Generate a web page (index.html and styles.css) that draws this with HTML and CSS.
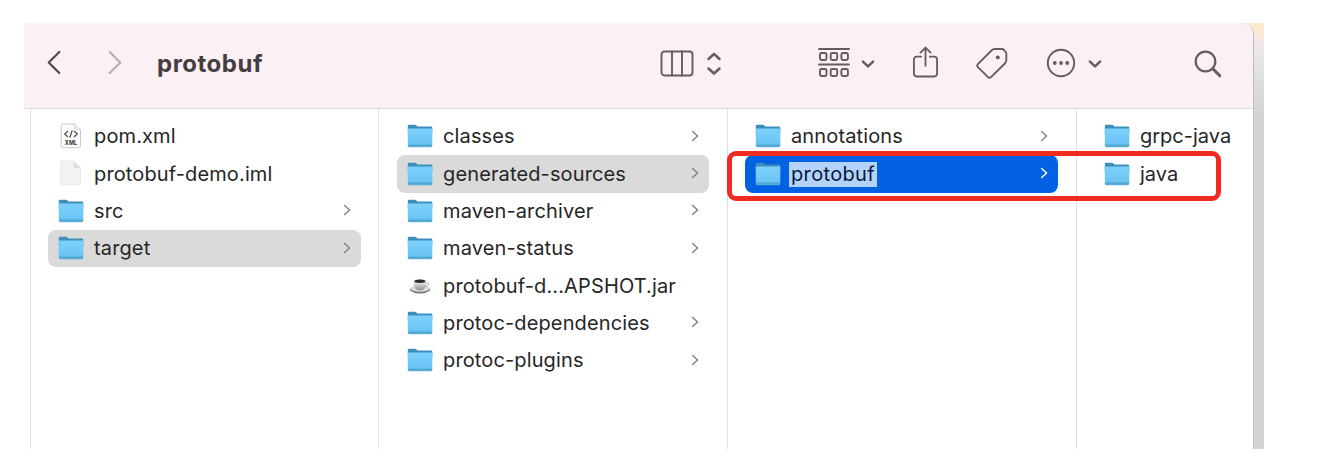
FILE: index.html
```html
<!DOCTYPE html>
<html lang="en">
<head>
<meta charset="utf-8">
<title>protobuf</title>
<link rel="stylesheet" href="styles.css">
</head>
<body>
<svg class="defs" aria-hidden="true">
  <defs>
    <linearGradient id="front" x1="0" y1="0" x2="0" y2="1">
      <stop offset="0" stop-color="#7dd0fb"/><stop offset="0.75" stop-color="#6cc6f6"/><stop offset="1" stop-color="#55a9d4"/>
    </linearGradient>
    <linearGradient id="cup" x1="0" y1="0" x2="0" y2="1">
      <stop offset="0" stop-color="#eee"/><stop offset="1" stop-color="#8e8e8e"/>
    </linearGradient>
    <symbol id="folder" viewBox="0 0 26 24">
      <path d="M.8 2.200Q.8.8 2.200.8H8q.8 0 1.500.7l.9.9H24q1.300 0 1.300 1.400V10H.8z" fill="#3c8fb9"/>
      <path d="M.8 4.600h24.500v17q0 1.600-1.600 1.600H2.400Q.8 23.200.8 21.600z" fill="url(#front)"/>
      <path d="M1 21.400h24.100" stroke="#4f9fc9" stroke-width=".8"/>
    </symbol>
    <symbol id="xml" viewBox="0 0 26 26">
      <path d="M5 1h11.500l6 5.500V23q0 1.800-1.800 1.800H5q-1.800 0-1.800-1.800V2.800Q3.200 1 5 1z" fill="#fcfcfc" stroke="#c9c9c9"/>
      <path d="M16.500 1v4q0 1.500 1.500 1.500h4.500" fill="#eee" stroke="#d2d2d2" stroke-width=".8"/>
      <path d="M10 8l-3.300 3L10 14M16 8l3.300 3L16 14M14.300 7.300l-2.600 7.400" fill="none" stroke="#555" stroke-width="1.300"/>
      <text x="13" y="21.600" class="badge">XML</text>
    </symbol>
    <symbol id="page" viewBox="0 0 26 26">
      <path d="M4 1h11.500l7 7v15.500q0 1.300-1.300 1.300H4q-1.300 0-1.300-1.300V2.300Q2.700 1 4 1z" fill="#f3f3f3" stroke="#e5e5e5" stroke-width=".8"/>
      <path d="M15.500 1v5.700q0 1.300 1.300 1.300h5.700z" fill="#ddd"/>
    </symbol>
    <symbol id="jar" viewBox="0 0 26 24">
      <ellipse cx="13" cy="15.500" rx="10" ry="4" fill="#777"/>
      <ellipse cx="13" cy="14.500" rx="9.500" ry="3.200" fill="#ddd"/>
      <path d="M6.500 7.500h12.800q0 9-6.400 9t-6.400-9z" fill="url(#cup)"/>
      <path d="M19 8.700q3.500 0 2.300 2.200-1 1.600-3.400 1.600" fill="none" stroke="#aaa"/>
      <ellipse cx="12.900" cy="7.400" rx="6.700" ry="2.500" fill="#ddd"/>
      <ellipse cx="12.900" cy="7.300" rx="5.400" ry="1.700" fill="#2c2826"/>
    </symbol>
    <symbol id="chev" viewBox="0 0 8 12">
      <path d="M1.600 1.500L6.600 6l-5 4.500" fill="none" stroke="currentColor" stroke-width="1.500" stroke-linecap="round" stroke-linejoin="round"/>
    </symbol>
    <symbol id="down" viewBox="0 0 14 10">
      <path d="M1.900 2.600L7 7.400l5.100-4.800" fill="none" stroke="currentColor" stroke-width="2.500" stroke-linecap="round" stroke-linejoin="round"/>
    </symbol>
  </defs>
</svg>

<div class="backdrop">
  <main class="window">
    <header class="toolbar">
      <svg class="back" viewBox="0 0 16 26"><path d="M13.500 2L2.500 13l11 11"/></svg>
      <svg class="forward" viewBox="0 0 16 26"><path d="M2.500 2l11 11-11 11"/></svg>
      <h1 class="title">protobuf</h1>
      <svg class="columns-icon" viewBox="0 0 34 28"><rect x="1.500" y="1.500" width="31" height="24" rx="3"/><path d="M12 1.500v24M22 1.500v24"/></svg>
      <svg class="updown" viewBox="0 0 16 26"><path d="M2.500 8L8 3l5.500 5M2.500 17.500L8 22.500l5.500-5"/></svg>
      <svg class="group-icon" viewBox="0 0 32 32">
        <path d="M1 2h30M1 17.500h30"/>
        <rect x="2" y="6" width="6.500" height="7" rx="1.500"/><rect x="12.700" y="6" width="6.500" height="7" rx="1.500"/><rect x="23.400" y="6" width="6.500" height="7" rx="1.500"/>
        <rect x="2" y="22" width="6.500" height="7" rx="1.500"/><rect x="12.700" y="22" width="6.500" height="7" rx="1.500"/><rect x="23.400" y="22" width="6.500" height="7" rx="1.500"/>
      </svg>
      <svg class="drop drop-group"><use href="#down"/></svg>
      <svg class="share" viewBox="0 0 28 34"><path d="M9.500 11.500H5q-3 0-3 3V29q0 3 3 3h18q3 0 3-3V14.500q0-3-3-3h-4.500M14 21V2.500M8.800 7.300L14 2l5.200 5.300"/></svg>
      <svg class="tag" viewBox="0 0 34 34"><path d="M2.700 18L17 3.600q1.500-1.500 3.500-1.500h7.200q1.300 0 2.200 1L31.300 4.700q1 1 1 2.300v6.500q0 2-1.500 3.500L16.500 31q-1.600 1.500-3.100 0L2.700 20.500q-1.200-1.200 0-2.500z"/><circle class="dot" cx="23.500" cy="10.700" r="2"/></svg>
      <svg class="more" viewBox="0 0 30 30"><circle cx="15" cy="15" r="13.200"/><circle class="dot" cx="8.800" cy="15" r="1.900"/><circle class="dot" cx="15" cy="15" r="1.900"/><circle class="dot" cx="21.200" cy="15" r="1.900"/></svg>
      <svg class="drop drop-more"><use href="#down"/></svg>
      <svg class="search" viewBox="0 0 28 28"><circle cx="11.500" cy="11.500" r="9.800"/><path class="handle" d="M18.800 18.800l7 7"/></svg>
    </header>

    <div class="browser">
      <ul class="column">
        <li class="row"><svg class="icon doc"><use href="#xml"/></svg><span class="name">pom.xml</span></li>
        <li class="row"><svg class="icon doc"><use href="#page"/></svg><span class="name">protobuf-demo.iml</span></li>
        <li class="row"><svg class="icon"><use href="#folder"/></svg><span class="name">src</span><svg class="chev"><use href="#chev"/></svg></li>
        <li class="row open"><svg class="icon"><use href="#folder"/></svg><span class="name">target</span><svg class="chev"><use href="#chev"/></svg></li>
      </ul>
      <ul class="column second">
        <li class="row"><svg class="icon"><use href="#folder"/></svg><span class="name">classes</span><svg class="chev"><use href="#chev"/></svg></li>
        <li class="row open"><svg class="icon"><use href="#folder"/></svg><span class="name">generated-sources</span><svg class="chev"><use href="#chev"/></svg></li>
        <li class="row"><svg class="icon"><use href="#folder"/></svg><span class="name">maven-archiver</span><svg class="chev"><use href="#chev"/></svg></li>
        <li class="row"><svg class="icon"><use href="#folder"/></svg><span class="name">maven-status</span><svg class="chev"><use href="#chev"/></svg></li>
        <li class="row"><svg class="icon"><use href="#jar"/></svg><span class="name">protobuf-d...APSHOT.jar</span></li>
        <li class="row"><svg class="icon"><use href="#folder"/></svg><span class="name">protoc-dependencies</span><svg class="chev"><use href="#chev"/></svg></li>
        <li class="row"><svg class="icon"><use href="#folder"/></svg><span class="name">protoc-plugins</span><svg class="chev"><use href="#chev"/></svg></li>
      </ul>
      <ul class="column">
        <li class="row"><svg class="icon"><use href="#folder"/></svg><span class="name">annotations</span><svg class="chev"><use href="#chev"/></svg></li>
        <li class="row selected"><svg class="icon"><use href="#folder"/></svg><span class="name editing">protobuf</span><svg class="chev"><use href="#chev"/></svg></li>
      </ul>
      <ul class="column">
        <li class="row"><svg class="icon"><use href="#folder"/></svg><span class="name tight">grpc-java</span></li>
        <li class="row"><svg class="icon"><use href="#folder"/></svg><span class="name tight">java</span></li>
      </ul>
      <div class="callout"></div>
    </div>
  </main>
</div>
</body>
</html>
```
FILE: styles.css
```css
* { box-sizing: border-box; }
body {
  margin: 0;
  padding: 23px 0 0 24px;
  height: 470px;
  overflow: hidden;
  background: #fff;
  font-family: Inter, "Liberation Sans", sans-serif;
  color: #262626;
}
svg { display: block; flex: none; }
.defs { position: absolute; width: 0; height: 0; }
.badge { font: 700 5.500px Inter, sans-serif; text-anchor: middle; fill: #333; }

.backdrop {
  width: 1240px;
  height: 426px;
  padding-right: 10px;
  background: linear-gradient(#fbe8cf 0, #fae9d8 12px, #eee6ee 22px, #dde2e1 50px, #d4d4d4 90px);
}
.window {
  width: 1230px;
  height: 426px;
  background: #fff;
  border-right: 1px solid #bdbbbc;
  border-top-right-radius: 12px;
  overflow: hidden;
}

.toolbar {
  display: flex;
  align-items: center;
  height: 86px;
  padding: 0 31px 6px 22px;
  background: #fbf1f4;
  border-bottom: 1px solid #e4dadd;
  color: #655c60;
}
.toolbar svg {
  fill: none;
  stroke: #655c60;
  stroke-width: 1.900px;
  stroke-linecap: round;
  stroke-linejoin: round;
}
.toolbar .dot { fill: #655c60; stroke: none; }
.toolbar .back { width: 16px; height: 25px; stroke-width: 2.300px; stroke: #514a4d; }
.toolbar .forward { width: 16px; height: 25px; margin-left: 45px; stroke-width: 2.300px; stroke: #b9afb3; }
.title {
  width: 504px;
  margin: 2px 0 0 34px;
  font-size: 24px;
  line-height: 30px;
  font-weight: 700;
  letter-spacing: .5px;
  color: #453d41;
}
.columns-icon { width: 34px; height: 28px; margin: 2px 0 0 2px; }
.toolbar .updown { width: 16px; height: 26px; margin: 3px 0 0 12px; stroke-width: 2.500px; }
.group-icon { width: 32px; height: 32px; margin-left: 96px; }
.toolbar .drop { width: 14px; height: 10px; }
.drop-group { margin: 2px 0 0 11px; }
.share { width: 27px; height: 34px; margin-left: 37px; margin-top: -2px; }
.tag { width: 33px; height: 33px; margin-left: 36px; margin-top: 2px; }
.more { width: 30px; height: 30px; margin-left: 38px; margin-top: 1px; }
.drop-more { margin: 2px 0 0 12px; }
.search { width: 28px; height: 28px; margin-left: 92px; margin-top: 2px; }
.toolbar .search { stroke-width: 2.200px; }
.toolbar .handle { stroke-width: 3px; }

.browser {
  position: relative;
  display: grid;
  grid-template-columns: 348px 349px 349px 177px;
  height: 340px;
  padding-left: 6px;
}
.column {
  margin: 0;
  padding: 9px 18px 0 17px;
  list-style: none;
  border-left: 1px solid #e0dfe0;
}
.column:first-child { padding-right: 17px; }
.second { padding-left: 18px; }
.row {
  display: flex;
  align-items: center;
  height: 37.350px;
  padding: 0 10px;
  border-radius: 8px;
}
.open { background: #dadada; }
.selected { background: #0262e3; }
.icon { width: 26px; height: 24px; margin-top: -1px; }
.doc { height: 26px; margin-top: -2px; }
.name {
  flex: 1;
  margin-left: 10px;
  font-size: 20px;
  line-height: 25px;
  letter-spacing: .13px;
  white-space: nowrap;
}
.tight { letter-spacing: 0; }
.chev { width: 8px; height: 12px; margin-top: -2px; color: #838383; }
.selected .chev { color: #fff; }
.editing {
  flex: none;
  margin: 0 auto 0 8px;
  padding: 0 2px;
  letter-spacing: .35px;
  background: #b3d3fa;
  color: #08183a;
}
.callout {
  position: absolute;
  left: 703px;
  top: 42px;
  width: 494px;
  height: 50px;
  border: 5px solid #f02c20;
  border-radius: 9px;
}
```
